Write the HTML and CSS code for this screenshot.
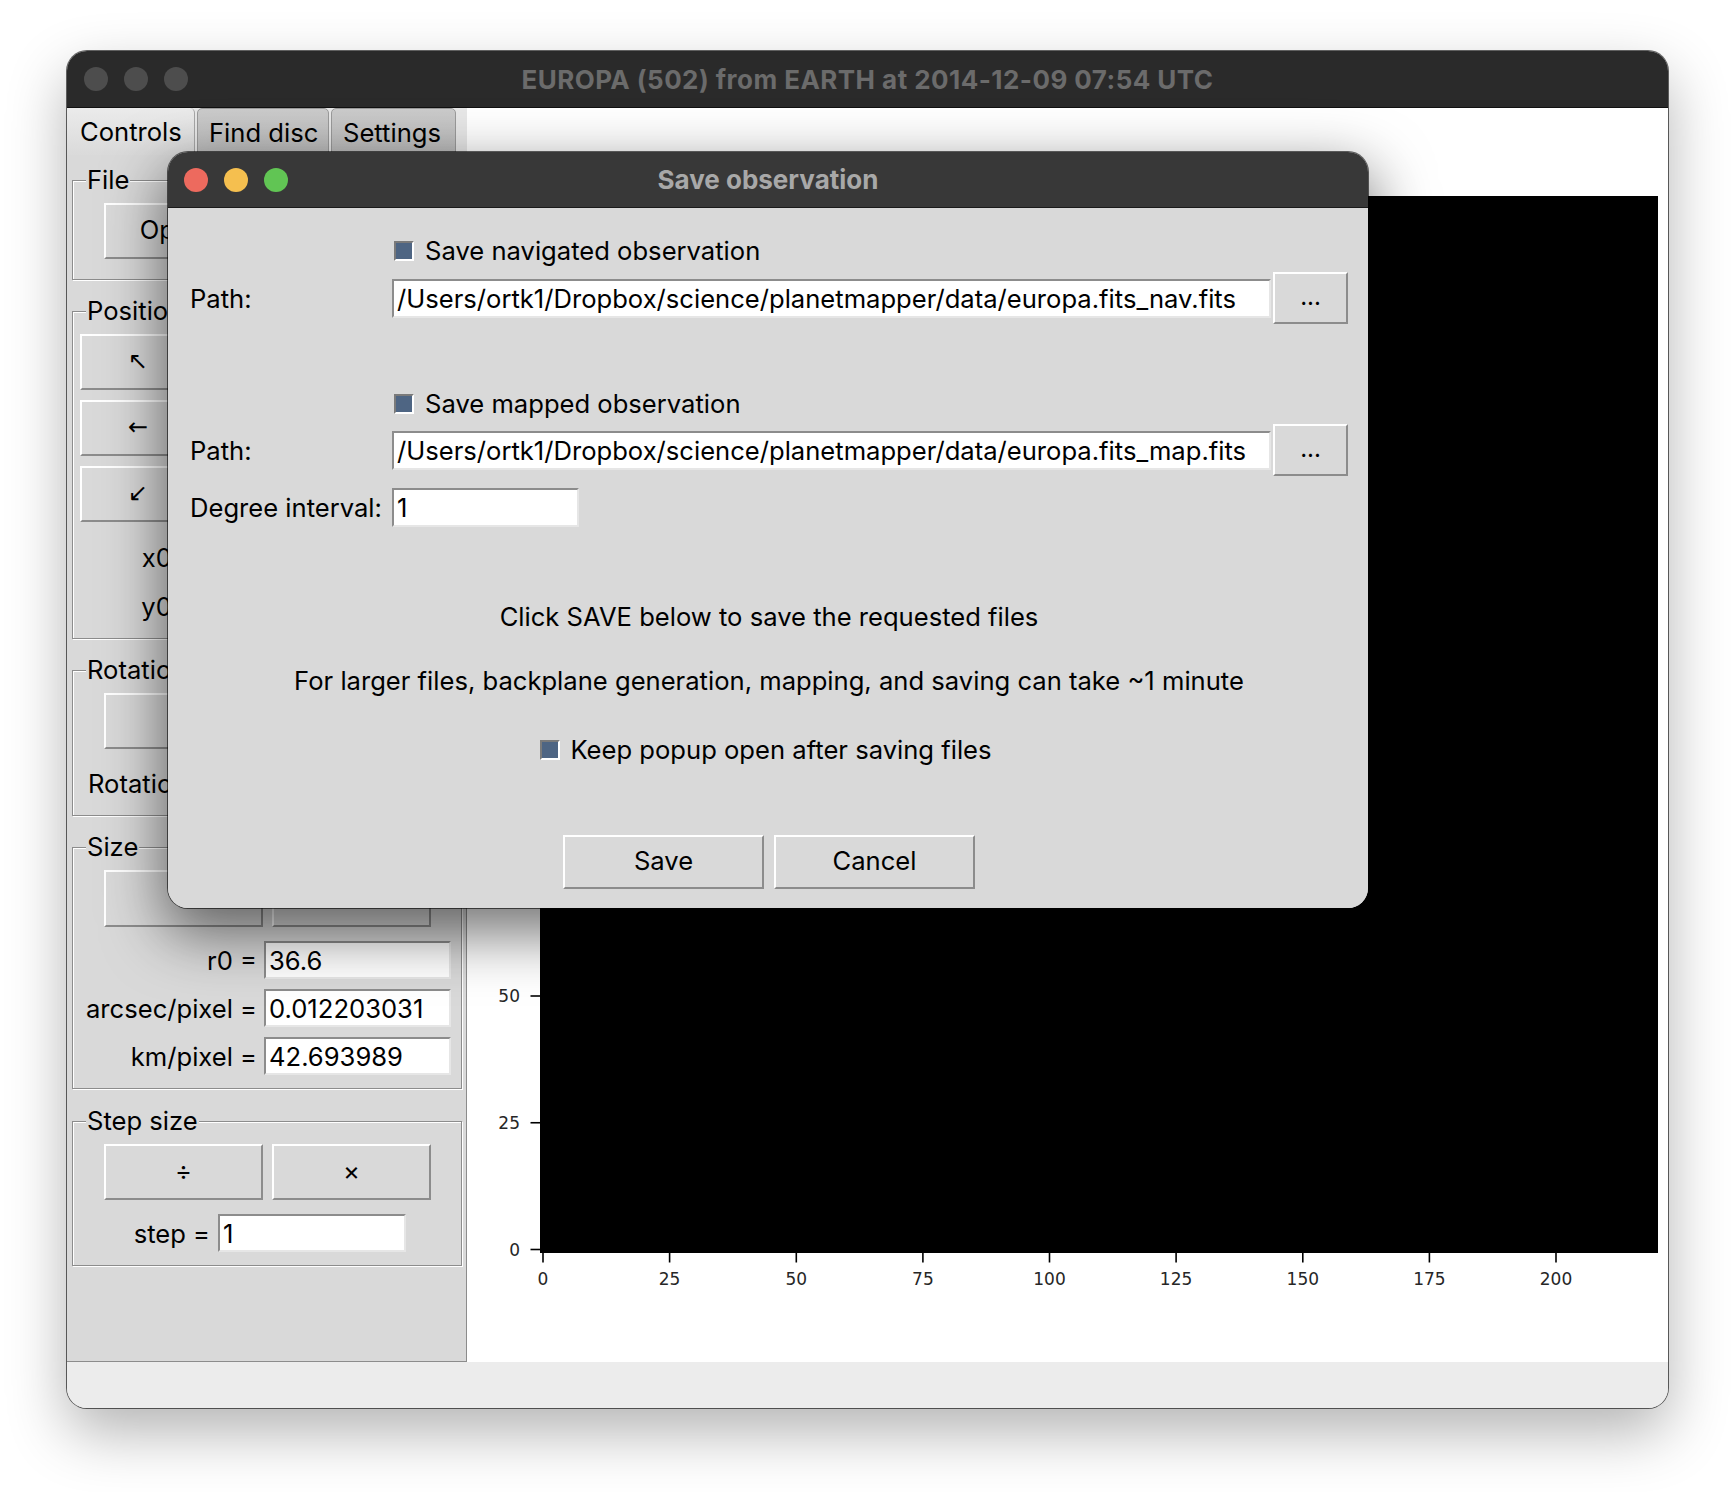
FILE: index.html
```html
<!DOCTYPE html>
<html lang="en">
<head>
<meta charset="utf-8">
<title>Save observation</title>
<link rel="stylesheet" href="styles.css">
</head>
<body>
<div class="desktop">

  <div class="window main-window">
    <div class="titlebar main-titlebar">
      <div class="lights"><span class="light"></span><span class="light"></span><span class="light"></span></div>
      <div class="title">EUROPA (502) from EARTH at 2014-12-09 07:54 UTC</div>
    </div>

    <div class="window-body">
      <div class="notebook">
        <div class="tabs">
          <div class="tab tab-controls active">Controls</div>
          <div class="tab tab-find">Find disc</div>
          <div class="tab tab-settings">Settings</div>
        </div>
        <div class="panel">
          <fieldset class="lf lf-file">
            <legend>File</legend>
            <div class="btn-pair">
              <button class="tk-btn">Open...</button>
              <button class="tk-btn"></button>
            </div>
          </fieldset>

          <fieldset class="lf lf-position">
            <legend>Position</legend>
            <div class="arrows">
              <button class="tk-btn arrow">↖</button>
              <button class="tk-btn arrow"></button>
              <button class="tk-btn arrow"></button>
              <button class="tk-btn arrow">←</button>
              <button class="tk-btn arrow"></button>
              <button class="tk-btn arrow"></button>
              <button class="tk-btn arrow">↙</button>
              <button class="tk-btn arrow"></button>
              <button class="tk-btn arrow"></button>
            </div>
            <div class="coord-grid">
              <div class="lbl">x0 =</div><input class="tk-entry" value="">
              <div class="lbl">y0 =</div><input class="tk-entry" value="">
            </div>
          </fieldset>

          <fieldset class="lf lf-rotation">
            <legend>Rotation</legend>
            <div class="btn-pair">
              <button class="tk-btn"></button>
              <button class="tk-btn"></button>
            </div>
            <div class="rot-row">
              <div class="lbl">Rotation</div><input class="tk-entry" value="">
            </div>
          </fieldset>

          <fieldset class="lf lf-size">
            <legend>Size</legend>
            <div class="btn-pair">
              <button class="tk-btn"></button>
              <button class="tk-btn"></button>
            </div>
            <div class="value-grid">
              <div class="lbl">r0 =</div><input class="tk-entry" value="36.6">
              <div class="lbl">arcsec/pixel =</div><input class="tk-entry" value="0.012203031">
              <div class="lbl">km/pixel =</div><input class="tk-entry" value="42.693989">
            </div>
          </fieldset>

          <fieldset class="lf lf-step">
            <legend>Step size</legend>
            <div class="btn-pair">
              <button class="tk-btn">÷</button>
              <button class="tk-btn">×</button>
            </div>
            <div class="step-row">
              <div class="lbl">step =</div><input class="tk-entry" value="1">
            </div>
          </fieldset>
        </div>
      </div>

      <div class="plot">
        <svg class="plot-svg" width="1201" height="1254" viewBox="0 0 1201 1254" xmlns="http://www.w3.org/2000/svg">
          <rect x="73" y="88" width="1118" height="1057" fill="#000"/>
          <g stroke="#000" stroke-width="1.6">
            <line x1="76" y1="1145" x2="76" y2="1154.5"/>
            <line x1="202.6" y1="1145" x2="202.6" y2="1154.5"/>
            <line x1="329.3" y1="1145" x2="329.3" y2="1154.5"/>
            <line x1="455.9" y1="1145" x2="455.9" y2="1154.5"/>
            <line x1="582.5" y1="1145" x2="582.5" y2="1154.5"/>
            <line x1="709.1" y1="1145" x2="709.1" y2="1154.5"/>
            <line x1="835.8" y1="1145" x2="835.8" y2="1154.5"/>
            <line x1="962.4" y1="1145" x2="962.4" y2="1154.5"/>
            <line x1="1089" y1="1145" x2="1089" y2="1154.5"/>
            <line x1="63.5" y1="1141.5" x2="73" y2="1141.5"/>
            <line x1="63.5" y1="1014.75" x2="73" y2="1014.75"/>
            <line x1="63.5" y1="888" x2="73" y2="888"/>
          </g>
          <g class="tick-text" text-anchor="middle">
            <text x="76" y="1177">0</text>
            <text x="202.6" y="1177">25</text>
            <text x="329.3" y="1177">50</text>
            <text x="455.9" y="1177">75</text>
            <text x="582.5" y="1177">100</text>
            <text x="709.1" y="1177">125</text>
            <text x="835.8" y="1177">150</text>
            <text x="962.4" y="1177">175</text>
            <text x="1089" y="1177">200</text>
          </g>
          <g class="tick-text" text-anchor="end">
            <text x="53" y="1147.7">0</text>
            <text x="53" y="1021">25</text>
            <text x="53" y="894.2">50</text>
          </g>
        </svg>
      </div>
    </div>

    <div class="statusbar"></div>
  </div>

  <div class="window dialog">
    <div class="titlebar dialog-titlebar">
      <div class="lights"><span class="light red"></span><span class="light yellow"></span><span class="light green"></span></div>
      <div class="title">Save observation</div>
    </div>
    <div class="dialog-body">
      <div class="form-row row-check-nav">
        <div></div>
        <div class="checkline"><span class="check"></span>Save navigated observation</div>
      </div>
      <div class="form-row row-path-nav">
        <div class="field-label">Path:</div>
        <input class="tk-entry path-entry" value="/Users/ortk1/Dropbox/science/planetmapper/data/europa.fits_nav.fits">
        <button class="tk-btn browse">...</button>
      </div>
      <div class="form-row row-check-map">
        <div></div>
        <div class="checkline"><span class="check"></span>Save mapped observation</div>
      </div>
      <div class="form-row row-path-map">
        <div class="field-label">Path:</div>
        <input class="tk-entry path-entry" value="/Users/ortk1/Dropbox/science/planetmapper/data/europa.fits_map.fits">
        <button class="tk-btn browse">...</button>
      </div>
      <div class="form-row row-degree">
        <div class="field-label">Degree interval:</div>
        <div><input class="tk-entry degree-entry" value="1"></div>
      </div>
      <p class="message msg-click">Click SAVE below to save the requested files</p>
      <p class="message msg-larger">For larger files, backplane generation, mapping, and saving can take ~1 minute</p>
      <div class="keep-row">
        <div class="checkline"><span class="check"></span>Keep popup open after saving files</div>
      </div>
      <div class="action-row">
        <button class="tk-btn action">Save</button>
        <button class="tk-btn action">Cancel</button>
      </div>
    </div>
  </div>

</div>
</body>
</html>
```

FILE: styles.css
```css
* {
  box-sizing: border-box;
}

html,
body {
  margin: 0;
  padding: 0;
  background: #ffffff;
}

body {
  font-family: Inter, "Liberation Sans", Arial, sans-serif;
  font-size: 25.6px;
  color: #000;
}

.desktop {
  position: relative;
  width: 1736px;
  height: 1492px;
  overflow: hidden;
  background: #ffffff;
}

/* ---------- windows ---------- */

.window {
  position: absolute;
  display: flex;
  flex-direction: column;
  border-radius: 20px;
  overflow: hidden;
}

.main-window {
  left: 67px;
  top: 51px;
  width: 1601px;
  height: 1357px;
  background: #ececec;
  box-shadow: 0 0 0 1px rgba(0, 0, 0, 0.6), 0 24px 60px rgba(0, 0, 0, 0.3);
}

.dialog {
  left: 168px;
  top: 152px;
  width: 1200px;
  height: 756px;
  background: #d9d9d9;
  box-shadow: 0 0 0 1px rgba(0, 0, 0, 0.6), 0 22px 60px 4px rgba(0, 0, 0, 0.55);
}

.titlebar {
  flex: none;
  display: grid;
  grid-template-columns: 1fr auto 1fr;
  align-items: center;
}

.main-titlebar {
  height: 57px;
  background: #2a2a2a;
  border-bottom: 1px solid #101010;
}

.dialog-titlebar {
  height: 56px;
  background: #383838;
  border-bottom: 1px solid #1a1a1a;
}

.lights {
  display: flex;
  gap: 16px;
  padding-left: 17px;
}

.dialog-titlebar .lights {
  padding-left: 16px;
}

.light {
  width: 24px;
  height: 24px;
  border-radius: 50%;
  background: #4d4d4d;
}

.light.red {
  background: #ed6a5e;
}

.light.yellow {
  background: #f5bf4f;
}

.light.green {
  background: #61c554;
}

.title {
  font-weight: bold;
  font-size: 26px;
  white-space: nowrap;
}

.main-titlebar .title {
  color: #6b6b6b;
  letter-spacing: 0.45px;
}

.dialog-titlebar .title {
  color: #a8a8a8;
}

/* ---------- main window body ---------- */

.window-body {
  flex: none;
  display: flex;
  height: 1254px;
}

.notebook {
  flex: none;
  width: 400px;
  display: flex;
  flex-direction: column;
  background: #e7e7e7;
}

.tabs {
  flex: none;
  display: flex;
  gap: 2px;
  height: 47px;
  background: #e7e7e7;
}

.tab {
  height: 47px;
  line-height: 47px;
  padding-left: 13px;
  white-space: nowrap;
  border-radius: 5px 5px 0 0;
  background: linear-gradient(#cbcbcb, #bcbcbc);
  border: 1px solid #9a9a9a;
}

.tab.active {
  background: linear-gradient(#ebebeb, #dadada);
  border-color: #a6a6a6;
  border-left: none;
  border-bottom: none;
  border-top: none;
  border-radius: 0 5px 0 0;
}

.tab-controls {
  width: 128px;
}

.tab-find {
  width: 132px;
  padding-left: 11px;
}

.tab-settings {
  width: 125px;
  padding-left: 11px;
}

.panel {
  flex: 1;
  background: #d9d9d9;
  border-right: 1px solid #8c8c8c;
  border-bottom: 1px solid #8c8c8c;
  padding: 10px 4px 0 5px;
}

/* labelled frames */

.lf {
  margin: 0 0 16px;
  padding: 8px 0 13px;
  min-inline-size: 0;
  border: 1px solid #8c8c8c;
  box-shadow: inset 1px 1px 0 #ffffff, 1px 1px 0 #ffffff;
}

.lf legend {
  margin-left: 13px;
  padding: 0 1px;
  height: 30px;
  line-height: 30px;
  background: #d9d9d9;
}

.lf-file {
  padding-bottom: 20px;
}

.lf-size {
  margin-bottom: 17px;
}

.btn-pair {
  display: grid;
  grid-template-columns: 159px 159px;
  column-gap: 9px;
  margin-left: 31px;
}

.tk-btn {
  font: inherit;
  color: #000;
  height: 56px;
  padding: 0 0 3px;
  background: #d9d9d9;
  border: 2px solid;
  border-color: #ffffff #8c8c8c #8c8c8c #ffffff;
  border-radius: 0;
}

.lf-size .tk-btn {
  height: 57px;
}

.tk-entry {
  font: inherit;
  color: #000;
  height: 38px;
  padding: 0 3px;
  background: #ffffff;
  border: 2px solid;
  border-color: #8c8c8c #e6e6e6 #e6e6e6 #8c8c8c;
  border-radius: 0;
  outline: none;
}

.lbl {
  text-align: right;
  white-space: nowrap;
}

.arrows {
  display: grid;
  grid-template-columns: repeat(3, 116px);
  grid-auto-rows: 56px;
  gap: 10px 8px;
  margin-left: 7px;
}

.arrow {
  font-family: "DejaVu Sans", sans-serif;
  font-size: 24px;
}

.coord-grid {
  display: grid;
  grid-template-columns: 116px 188px;
  grid-auto-rows: 38px;
  gap: 11px 7px;
  align-items: center;
  margin: 16px 0 0 7px;
}

.coord-grid .tk-entry {
  width: 188px;
}

.rot-row {
  display: flex;
  align-items: center;
  gap: 11px;
  margin: 15px 0 0 15px;
}

.rot-row .tk-entry {
  width: 150px;
}

.value-grid {
  display: grid;
  grid-template-columns: 184px 187px;
  grid-auto-rows: 38px;
  gap: 10px 7px;
  align-items: center;
  margin-top: 14px;
}

.value-grid .tk-entry {
  width: 187px;
}

.step-row {
  display: grid;
  grid-template-columns: 137px 188px;
  column-gap: 8px;
  align-items: center;
  margin-top: 14px;
}

.step-row .tk-entry {
  width: 188px;
}

/* plot */

.plot {
  flex: 1;
  background: #ffffff;
}

.plot-svg {
  display: block;
}

.tick-text {
  font-family: "DejaVu Sans", sans-serif;
  font-size: 17px;
  fill: #262626;
}

.statusbar {
  flex: none;
  height: 46px;
  background: #ececec;
}

/* ---------- dialog body ---------- */

.dialog-body {
  flex: 1;
  display: flex;
  flex-direction: column;
  padding: 0 20px 0 22px;
  background: #d9d9d9;
}

.form-row {
  display: grid;
  grid-template-columns: 202px 881px 75px;
  align-items: center;
}

.row-check-nav {
  margin-top: 28px;
  height: 30px;
}

.row-path-nav {
  margin-top: 6px;
  height: 52px;
}

.row-check-map {
  margin-top: 65px;
  height: 30px;
}

.row-path-map {
  margin-top: 5px;
  height: 52px;
}

.row-degree {
  margin-top: 12px;
  height: 39px;
}

.field-label {
  white-space: nowrap;
}

.path-entry {
  width: 879px;
  height: 39px;
}

.degree-entry {
  width: 187px;
  height: 39px;
}

.browse {
  width: 75px;
  height: 52px;
  font-size: 24px;
}

.checkline {
  display: flex;
  align-items: center;
  white-space: nowrap;
  line-height: 30px;
}

.check {
  flex: none;
  width: 20px;
  height: 20px;
  margin-right: 11px;
  background: #4e6583;
  border-style: solid;
  border-width: 2px;
  border-color: #7a7a7a #ffffff #ffffff #7a7a7a;
}

.form-row .check {
  margin-left: 2px;
}

.message {
  margin: 0;
  height: 30px;
  line-height: 30px;
  text-align: center;
  white-space: nowrap;
}

.msg-click {
  margin-top: 75px;
}

.msg-larger {
  margin-top: 34px;
}

.keep-row {
  display: flex;
  justify-content: center;
  margin-top: 39px;
  height: 30px;
  padding-right: 6px;
}

.keep-row .check {
  margin-right: 10px;
}

.action-row {
  display: flex;
  justify-content: center;
  gap: 10px;
  margin-top: 70px;
}

.action {
  width: 201px;
  height: 54px;
}
```
